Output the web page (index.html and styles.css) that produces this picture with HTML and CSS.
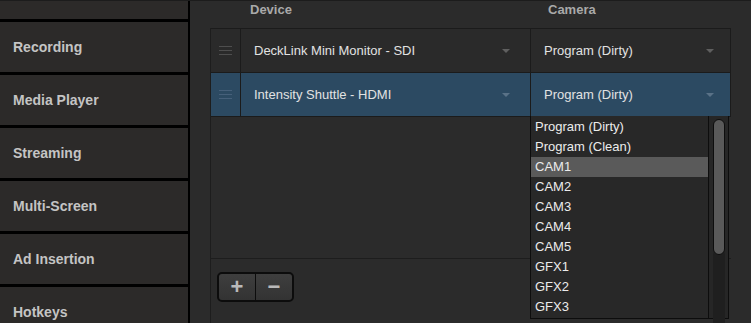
FILE: index.html
```html
<!DOCTYPE html>
<html lang="en">
<head>
  <meta charset="UTF-8">
  <title>Outputs</title>
  <link rel="stylesheet" href="styles.css">
</head>
<body>

  <!-- Sidebar -->
  <div class="sidebar">
    <div class="side-list">
      <div class="side-item"></div>
      <div class="side-item">Recording</div>
      <div class="side-item">Media Player</div>
      <div class="side-item">Streaming</div>
      <div class="side-item">Multi-Screen</div>
      <div class="side-item">Ad Insertion</div>
      <div class="side-item">Hotkeys</div>
    </div>
  </div>

  <!-- Output table -->
  <div class="main">
    <div class="col-heads">
      <div class="head-device">Device</div>
      <div class="head-camera">Camera</div>
    </div>

    <div class="panel">
      <div class="rows">
        <div class="row">
          <div class="handle"><span></span><span></span><span></span></div>
          <div class="cell device">DeckLink Mini Monitor - SDI<i class="arrow"></i></div>
          <div class="cell camera">Program (Dirty)<i class="arrow"></i></div>
        </div>
        <div class="row selected">
          <div class="handle"><span></span><span></span><span></span></div>
          <div class="cell device">Intensity Shuttle - HDMI<i class="arrow"></i></div>
          <div class="cell camera">Program (Dirty)<i class="arrow"></i></div>
        </div>
      </div>
      <div class="footer">
        <div class="btn-group">
          <button class="btn">+</button>
          <button class="btn">&minus;</button>
        </div>
      </div>
    </div>

    <!-- Open camera dropdown -->
    <div class="dropdown">
      <div class="options">
        <div class="option">Program (Dirty)</div>
        <div class="option">Program (Clean)</div>
        <div class="option active">CAM1</div>
        <div class="option">CAM2</div>
        <div class="option">CAM3</div>
        <div class="option">CAM4</div>
        <div class="option">CAM5</div>
        <div class="option">GFX1</div>
        <div class="option">GFX2</div>
        <div class="option">GFX3</div>
      </div>
      <div class="scrollbar"><div class="thumb"></div></div>
    </div>
  </div>

</body>
</html>
```

FILE: styles.css
```css
/* General */
body {
  margin: 0;
  height: 323px;
  overflow: hidden;
  display: flex;
  font-family: "Liberation Sans", Arial, sans-serif;
  background-color: #2b2b2b;
  border-top: 1px solid #1c1c1c;
  box-sizing: border-box;
}

/* Sidebar */
.sidebar {
  width: 188px;
  flex: none;
  background-color: #000;
  border-right: 2px solid #000;
  overflow: hidden;
}

.side-list {
  margin-top: -32px;
}

.side-item {
  height: 50px;
  margin-bottom: 3px;
  background-color: #2c2a29;
  color: #c4c4c4;
  font-size: 14px;
  font-weight: bold;
  padding-left: 13px;
  display: flex;
  align-items: center;
}

/* Main area */
.main {
  flex: 1;
  position: relative;
  padding-left: 20px;
}

.col-heads {
  height: 27px;
  display: flex;
  font-size: 13px;
  font-weight: bold;
  color: #a9a9a9;
}

.head-device {
  width: 298px;
  padding-left: 40px;
  margin-top: 1px;
}

.head-camera {
  margin-top: 1px;
}

.panel {
  width: 520px;
  height: 296px;
  border-left: 1px solid #1d1d1d;
  display: flex;
  flex-direction: column;
}

.rows {
  height: 230px;
  border-bottom: 1px solid #1d1d1d;
}

.row {
  height: 43px;
  display: flex;
  border: 1px solid #1b1b1b;
  border-left: none;
  margin-bottom: -1px;
  background-color: #2a2a2a;
}

.row.selected {
  background-color: #2c4a62;
}

.handle {
  width: 29px;
  border-right: 1px solid #1b1b1b;
  display: flex;
  flex-direction: column;
  justify-content: center;
  align-items: center;
  gap: 3px;
}

.handle span {
  width: 13px;
  height: 1px;
  background-color: #4e4e4e;
}

.selected .handle span {
  background-color: #46607a;
}

.cell {
  display: flex;
  align-items: center;
  justify-content: space-between;
  font-size: 13px;
  color: #e2e2e2;
  box-sizing: border-box;
}

.device {
  width: 290px;
  padding: 0 20px 0 13px;
  border-right: 1px solid #1b1b1b;
}

.camera {
  flex: 1;
  padding: 0 16px 0 13px;
}

.arrow {
  width: 0;
  height: 0;
  border-left: 4px solid transparent;
  border-right: 4px solid transparent;
  border-top: 4px solid #5f5f5f;
}

.selected .arrow {
  border-top-color: #5a7287;
}

.footer {
  padding: 13px 0 0 6px;
}

.btn-group {
  display: inline-flex;
  border: 2px solid #0c0c0c;
  border-radius: 5px;
  overflow: hidden;
  background-color: #0c0c0c;
  gap: 1px;
}

.btn {
  width: 36px;
  height: 26px;
  border: none;
  padding: 0;
  background: linear-gradient(#3e3e3e, #333);
  color: #b9b9b9;
  font-family: "Liberation Sans", Arial, sans-serif;
  font-size: 22px;
  font-weight: bold;
  line-height: 26px;
}

/* Dropdown list */
.dropdown {
  position: absolute;
  left: 340px;
  top: 115px;
  width: 197px;
  height: 202px;
  border: 1px solid #0d0d0d;
  border-top: none;
  background-color: #282828;
  display: flex;
}

.options {
  flex: 1;
  padding-top: 1px;
}

.option {
  height: 20px;
  line-height: 20px;
  padding-left: 4px;
  font-size: 13px;
  color: #ececec;
}

.option.active {
  background-color: #5a5a5a;
}

.scrollbar {
  width: 20px;
  border-left: 1px solid #0d0d0d;
  display: flex;
  justify-content: center;
  padding-top: 3px;
  box-sizing: border-box;
  background-color: #262626;
}

.thumb {
  width: 10px;
  height: 134px;
  border: 1px solid #0d0d0d;
  border-radius: 6px;
  background-color: #595959;
  box-shadow: 0 130px 0 0 #1f1f1f;
}
```
